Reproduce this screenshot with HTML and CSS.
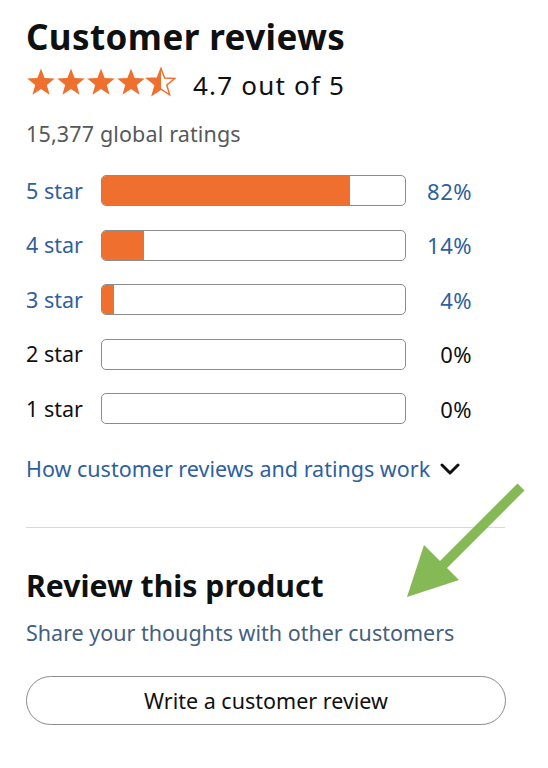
FILE: index.html
```html
<!DOCTYPE html>
<html lang="en">
<head>
<meta charset="utf-8">
<title>Customer reviews</title>
<link rel="stylesheet" href="styles.css">
</head>
<body>
<main class="reviews">
  <h2 class="title">Customer reviews</h2>
  <div class="summary">
    <div class="stars" aria-label="4.7 out of 5 stars">
      <svg width="150" height="30" viewBox="0 0 150 30">
        <defs>
          <path id="star" d="M15 1.5 L18.6 11.1 L28.8 11.5 L20.8 17.9 L23.6 27.8 L15 22.1 L6.4 27.8 L9.2 17.9 L1.2 11.5 L11.4 11.1 Z"/>
          <clipPath id="half"><rect x="0" y="0" width="15" height="30"/></clipPath>
        </defs>
        <use href="#star" x="0" class="star-fill"/>
        <use href="#star" x="30" class="star-fill"/>
        <use href="#star" x="60" class="star-fill"/>
        <use href="#star" x="90" class="star-fill"/>
        <g transform="translate(120 0)">
          <use href="#star" class="star-outline"/>
          <use href="#star" class="star-fill" clip-path="url(#half)"/>
        </g>
      </svg>
    </div>
    <span class="score">4.7 out of 5</span>
  </div>
  <p class="total">15,377 global ratings</p>

  <div class="histogram">
    <a class="label link">5 star</a>
    <div class="bar"><div class="fill" style="width:82%"></div></div>
    <a class="pct link">82%</a>

    <a class="label link">4 star</a>
    <div class="bar"><div class="fill" style="width:14%"></div></div>
    <a class="pct link">14%</a>

    <a class="label link">3 star</a>
    <div class="bar"><div class="fill" style="width:4%"></div></div>
    <a class="pct link">4%</a>

    <span class="label">2 star</span>
    <div class="bar"></div>
    <span class="pct">0%</span>

    <span class="label">1 star</span>
    <div class="bar"></div>
    <span class="pct">0%</span>
  </div>

  <a class="how link">How customer reviews and ratings work
    <svg class="chevron" width="20" height="12" viewBox="0 0 20 12"><path d="M2 2 L10 10 L18 2" fill="none" stroke="#0f1111" stroke-width="3" stroke-linecap="round" stroke-linejoin="round"/></svg>
  </a>

  <hr class="divider">

  <h3 class="subtitle">Review this product</h3>
  <p class="share">Share your thoughts with other customers</p>
  <button class="write">Write a customer review</button>
</main>

<svg class="arrow" width="548" height="768" viewBox="0 0 548 768">
  <line x1="521" y1="487" x2="441" y2="567" stroke="#85b955" stroke-width="10"/>
  <polygon points="407,597 424,545 459,580" fill="#85b955"/>
</svg>
</body>
</html>
```

FILE: styles.css
```css
* { box-sizing: border-box; }

html, body {
  margin: 0;
  padding: 0;
  background: #ffffff;
}

body {
  font-family: "Noto Sans", "Open Sans", Arial, sans-serif;
  color: #0f1111;
  position: relative;
  width: 548px;
  height: 768px;
  overflow: hidden;
}

.reviews {
  padding: 15px 43px 0 26px;
  display: flex;
  flex-direction: column;
}

.title {
  margin: 0;
  font-size: 35px;
  line-height: 44px;
  font-weight: 700;
  letter-spacing: 0.4px;
}

.summary {
  margin-top: 8px;
  display: flex;
  align-items: flex-end;
  gap: 17px;
}

.stars { display: flex; height: 30px; margin-bottom: 3px; }

.star-fill { fill: #ef6f2e; }
.star-outline { fill: none; stroke: #ef6f2e; stroke-width: 1.5; }

.score {
  font-size: 26px;
  line-height: 30px;
  letter-spacing: 1.2px;
}

.total {
  margin: 21px 0 0;
  font-size: 21.5px;
  line-height: 26px;
  letter-spacing: 0.15px;
  color: #565959;
}

.link { color: #2e5f9e; text-decoration: none; }

.histogram {
  margin-top: 28px;
  display: grid;
  grid-template-columns: 75px 305px 66px;
  grid-auto-rows: 31px;
  row-gap: 23.5px;
  align-items: center;
}

.label {
  font-size: 21.5px;
  line-height: 26px;
}

.pct {
  font-size: 22px;
  line-height: 26px;
  letter-spacing: 0.5px;
  text-align: right;
}

.bar {
  height: 31px;
  border: 1px solid #8a8d8d;
  border-radius: 5px;
  overflow: hidden;
  background: #fff;
}

.fill {
  height: 100%;
  background: #ef6f2e;
}

.how {
  margin-top: 31px;
  font-size: 21.5px;
  line-height: 28px;
  display: flex;
  align-items: center;
  gap: 10px;
}

.chevron { flex: none; }

.divider {
  margin: 44px 0 0;
  border: 0;
  border-top: 1px solid #d5d9d9;
  width: 479px;
}

.subtitle {
  margin: 40px 0 0;
  font-size: 30.2px;
  line-height: 36px;
  font-weight: 700;
}

.share {
  margin: 16px 0 0;
  font-size: 21.5px;
  line-height: 26px;
  color: #45607d;
}

.write {
  margin-top: 30px;
  width: 480px;
  height: 49px;
  border: 1px solid #888c8c;
  border-radius: 25px;
  background: #fff;
  font-family: inherit;
  font-size: 21.5px;
  color: #0f1111;
  padding: 0;
}

.arrow {
  position: absolute;
  left: 0;
  top: 0;
  pointer-events: none;
}
```
